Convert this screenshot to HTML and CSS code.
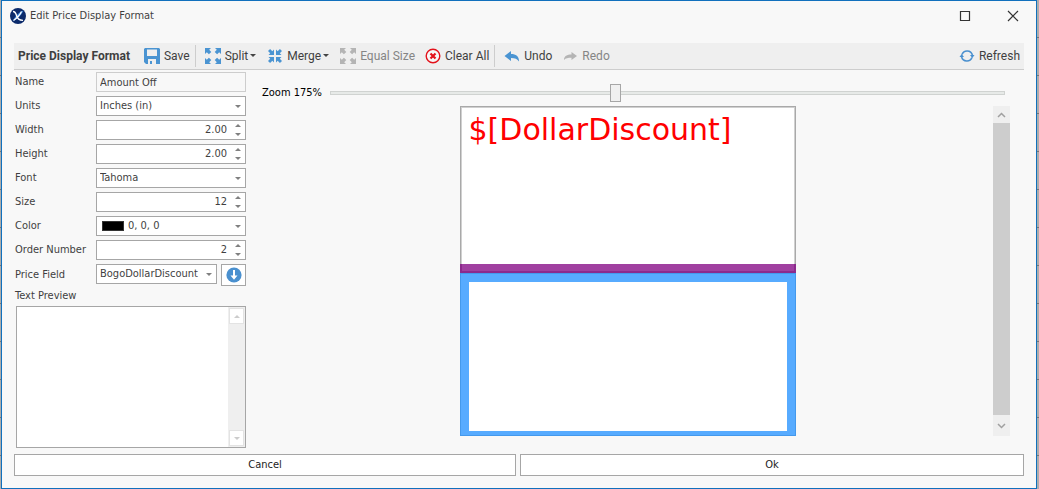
FILE: index.html
```html
<!DOCTYPE html>
<html lang="en">
<head>
<meta charset="utf-8">
<title>Edit Price Display Format</title>
<link rel="stylesheet" href="styles.css">
</head>
<body>
<svg class="defs" aria-hidden="true">
  <symbol id="expand" viewBox="0 0 16 16">
    <path d="M0 0h6L4.200 1.800 6.300 3.900 3.900 6.300 1.800 4.200 0 6z"/>
    <path d="M16 0h-6l1.800 1.800-2.100 2.100 2.400 2.400 2.100-2.100L16 6z"/>
    <path d="M0 16h6l-1.800-1.800 2.100-2.100-2.400-2.400-2.100 2.100L0 10z"/>
    <path d="M16 16h-6l1.800-1.800-2.100-2.100 2.400-2.400 2.100 2.100L16 10z"/>
  </symbol>
  <symbol id="shrink" viewBox="0 0 16 16">
    <path d="M7 7H1.500l1.700-1.700L1 3.100 3.100 1l2.200 2.200L7 1.500z"/>
    <path d="M9 7h5.500l-1.700-1.700L15 3.100 12.900 1l-2.200 2.200L9 1.500z"/>
    <path d="M7 9H1.500l1.700 1.700L1 12.900 3.100 15l2.200-2.200L7 14.500z"/>
    <path d="M9 9h5.500l-1.700 1.700 2.200 2.200-2.100 2.100-2.200-2.200L9 14.500z"/>
  </symbol>
</svg>
<main class="window">
  <header class="titlebar">
    <svg class="icon" viewBox="0 0 16 16" aria-hidden="true">
      <circle cx="8" cy="8" r="8" fill="#0b2a6b"/>
      <path d="M13.500 2.500C12 6 8.500 10.500 3 13 5 8 9 4 13.500 2.500z" fill="#3f8be0"/>
      <path d="M3 3.500c2.200 0 2.800 1.500 3.500 4C7.200 10.500 9 12.300 13 12.300M3.500 12.500C7 10 10 7 11.500 3.500" fill="none" stroke="#fff" stroke-width="1.300"/>
    </svg>
    <h1 class="title">Edit Price Display Format</h1>
    <button class="window-button" aria-label="Maximize"><svg viewBox="0 0 12 12"><path d="M1.500 1.500h9v9h-9z"/></svg></button>
    <button class="window-button" aria-label="Close"><svg viewBox="0 0 12 12"><path d="M1 1l10 10M11 1L1 11"/></svg></button>
  </header>

  <nav class="toolbar">
    <strong class="toolbar-title">Price Display Format</strong>
    <button class="tool"><svg class="icon blue" viewBox="0 0 16 16"><path fill-rule="evenodd" d="M1 0h14l1 1v15H2l-2-2V1zM3 1.500V8h10V1.500zM4 11v5h2v-3h2v3h4v-5z"/></svg>Save</button>
    <span class="separator"></span>
    <button class="tool"><svg class="icon blue"><use href="#expand"/></svg><span class="with-caret">Split</span></button>
    <button class="tool"><svg class="icon blue"><use href="#shrink"/></svg><span class="with-caret">Merge</span></button>
    <button class="tool" disabled><svg class="icon gray"><use href="#expand"/></svg>Equal Size</button>
    <button class="tool"><svg class="icon" viewBox="0 0 16 16"><circle cx="8" cy="8" r="6.800" fill="#fff" fill-opacity=".5" stroke="#e3121b" stroke-width="1.400"/><path d="M5.500 5.500l5 5M10.500 5.500l-5 5" stroke="#e3121b" stroke-width="2.200"/></svg>Clear All</button>
    <span class="separator"></span>
    <button class="tool"><svg class="icon blue" viewBox="0 0 16 16"><path d="M.5 8L7 3v3c5 0 8 2 8 7.500C13.500 11 11 10 7 10v3z"/></svg>Undo</button>
    <button class="tool" disabled><svg class="icon gray" viewBox="0 0 16 16"><path d="M15 8L9.500 4v2.500C5 6.500 2 8 2 12c1.500-1.800 4-2.200 7.500-2.200V12z"/></svg>Redo</button>
    <button class="tool refresh"><svg class="icon" viewBox="0 0 16 16"><path d="M3 6.500A5.500 5.500 0 0 1 13.400 7M13 9.500A5.500 5.500 0 0 1 2.600 9" fill="none" stroke="#4a90cf" stroke-width="1.600"/><path d="M11 7h4.500l-2.200 3zM.5 9H5L2.700 6z" fill="#4a90cf"/></svg>Refresh</button>
  </nav>

  <div class="workspace">
    <form class="settings">
      <label for="name">Name</label>
      <input class="field" id="name" value="Amount Off" readonly>
      <label for="units">Units</label>
      <select class="field" id="units"><option>Inches (in)</option></select>
      <label for="width">Width</label>
      <div class="field spin"><input id="width" value="2.00"><button type="button" class="up" aria-label="Increase width"></button><button type="button" class="down" aria-label="Decrease width"></button></div>
      <label for="height">Height</label>
      <div class="field spin"><input id="height" value="2.00"><button type="button" class="up" aria-label="Increase height"></button><button type="button" class="down" aria-label="Decrease height"></button></div>
      <label for="font">Font</label>
      <select class="field" id="font"><option>Tahoma</option></select>
      <label for="size">Size</label>
      <div class="field spin"><input id="size" value="12"><button type="button" class="up" aria-label="Increase size"></button><button type="button" class="down" aria-label="Decrease size"></button></div>
      <label for="color">Color</label>
      <div class="field color"><span class="swatch"></span><select id="color"><option>0, 0, 0</option></select></div>
      <label for="order">Order Number</label>
      <div class="field spin"><input id="order" value="2"><button type="button" class="up" aria-label="Increase order"></button><button type="button" class="down" aria-label="Decrease order"></button></div>
      <label for="price">Price Field</label>
      <div class="price-row">
        <select class="field" id="price"><option>BogoDollarDiscount</option></select>
        <button type="button" class="insert" aria-label="Insert price field"><svg viewBox="0 0 16 16"><circle cx="8" cy="8" r="7.600" fill="#4a90cf"/><path d="M7 3h2v5.500h2.500L8 12.800 4.500 8.500H7z" fill="#fff"/></svg></button>
      </div>
      <label class="preview-label" for="preview">Text Preview</label>
      <div class="preview">
        <textarea id="preview"></textarea>
        <div class="preview-scroll"><button type="button" class="up" aria-label="Scroll up"></button><button type="button" class="down" aria-label="Scroll down"></button></div>
      </div>
    </form>

    <section class="designer">
      <div class="zoom">
        <label for="zoom">Zoom 175%</label>
        <input id="zoom" type="range" min="0" max="415" value="175">
      </div>
      <div class="stage">
        <div class="sheet">
          <div class="cell">$[DollarDiscount]</div>
          <div class="splitter"></div>
          <div class="cell selected"></div>
        </div>
        <div class="scrollbar">
          <button aria-label="Scroll up"><svg viewBox="0 0 9 6"><path d="M1 5l3.500-3.500L8 5"/></svg></button>
          <span class="thumb"></span>
          <button aria-label="Scroll down"><svg viewBox="0 0 9 6"><path d="M1 1l3.500 3.500L8 1"/></svg></button>
        </div>
      </div>
    </section>
  </div>

  <footer class="actions">
    <button>Cancel</button>
    <button>Ok</button>
  </footer>
</main>
</body>
</html>
```
FILE: styles.css
```css
* { box-sizing: border-box; }

body {
  margin: 0;
  padding: 0 2px 0 1px;
  background: repeating-linear-gradient(#adadad 0 37px, #777 37px 38px);
  color: #3f3f3f;
  font: 11px/14px "DejaVu Sans Condensed", "DejaVu Sans", sans-serif;
}

button, input, select, textarea {
  margin: 0;
  padding: 0;
  border: 0;
  border-radius: 0;
  background: none;
  color: inherit;
  font: inherit;
}

select { appearance: none; }

.defs { position: absolute; width: 0; height: 0; }
.icon { width: 16px; height: 16px; flex: none; }
.blue { fill: #4a94d2; }
.gray { fill: #b4b4b4; }

.window {
  display: flex;
  flex-direction: column;
  min-height: 100vh;
  padding: 0 12px 12px;
  border: 1px solid #1170bd;
  background: #f8f8f8;
}

.titlebar {
  display: flex;
  align-items: center;
  height: 30px;
  margin: 0 -4px 12px;
}

.title {
  flex: 1;
  margin: 0 0 0 4px;
  font-size: 11px;
  font-weight: 400;
  line-height: 16px;
}

.window-button { display: flex; justify-content: center; width: 48px; }
.window-button:last-child { margin-right: -9px; }
.window-button svg { width: 12px; height: 12px; fill: none; stroke: #333; stroke-width: 1.200; }

.toolbar {
  display: flex;
  align-items: center;
  height: 27px;
  padding: 0 4px;
  border-bottom: 1px solid #cdcdcd;
  background: #efefef;
  font: 12px/16px Roboto, sans-serif;
}

.toolbar-title { margin-right: 9px; }
.tool { display: flex; align-items: center; gap: 4px; padding: 0 5px; white-space: nowrap; }
.tool:disabled { color: #858585; }
.refresh { margin-left: auto; padding-right: 0; }
.separator { width: 1px; height: 22px; margin: 0 4px 0 0; background: #cdcdcd; }

.with-caret::after {
  content: "";
  display: inline-block;
  margin: 0 1px 0 2px;
  border: 3px solid transparent;
  border-top-color: #444;
  border-bottom: 0;
  vertical-align: 3px;
}

.workspace {
  display: flex;
  flex: 1;
  gap: 16px;
  padding: 2px 14px 6px 1px;
}

.settings {
  display: grid;
  grid-template-columns: 81px 150px;
  grid-template-rows: repeat(8, 20px) 22px 12px 1fr;
  row-gap: 4px;
  align-items: center;
}

.field {
  display: flex;
  align-items: center;
  width: 100%;
  height: 20px;
  padding: 0 3px;
  border: 1px solid #a6a6a6;
  background-color: #fff;
}

input.field:read-only { border-color: #cdcdcd; background: #f8f8f8; }

select.field, .color select {
  background: #fff url("data:image/svg+xml,%3Csvg xmlns='http://www.w3.org/2000/svg' width='6' height='3'%3E%3Cpath d='M0 0h6L3 3z' fill='%23808080'/%3E%3C/svg%3E") no-repeat right 4px center;
}

.color { gap: 4px; padding: 0 0 0 5px; }
.color select { flex: 1; height: 100%; }
.swatch { width: 22px; height: 10px; border: 1px solid #333; background: #000; }

.spin { display: grid; grid-template-columns: 1fr 8px; column-gap: 7px; padding: 0 3px 0 0; }
.spin input { grid-row: 1 / 3; width: 100%; text-align: right; }

.up, .down { display: flex; justify-content: center; height: 9px; align-items: center; }
.up::before, .down::before { content: ""; border: 3px solid transparent; }
.up::before { border-bottom-color: #808080; border-top: 0; }
.down::before { border-top-color: #808080; border-bottom: 0; }

.price-row { display: flex; gap: 4px; align-items: flex-start; }
.price-row .field { flex: 1; min-width: 0; }
.insert { width: 25px; height: 22px; padding: 2px 4px; border: 1px solid #a6a6a6; background: #fff; }
.insert svg { display: block; width: 16px; height: 16px; }

.preview-label, .preview { grid-column: 1 / 3; }

.preview {
  display: flex;
  align-self: stretch;
  margin-left: 1px;
  border: 1px solid #a6a6a6;
  background: #fff;
}

.preview textarea { flex: 1; min-width: 0; resize: none; }

.preview-scroll {
  display: flex;
  flex-direction: column;
  justify-content: space-between;
  width: 17px;
  padding: 1px;
  background: #efefef;
}

.preview-scroll button { height: 16px; border: 1px solid #e3e3e3; background: #fff; }
.preview-scroll .up::before { border-bottom-color: #ccc; }
.preview-scroll .down::before { border-top-color: #ccc; }

.designer { display: flex; flex: 1; flex-direction: column; min-width: 0; }

.zoom {
  display: flex;
  align-items: center;
  gap: 8px;
  height: 18px;
  margin: 12px 5px 4px 0;
  color: #000;
}

.zoom label { width: 60px; white-space: nowrap; }
.zoom input { flex: 1; min-width: 0; height: 18px; appearance: none; }

.zoom input::-webkit-slider-runnable-track {
  height: 4px;
  border: 1px solid #d0d3d1;
  background: #e7eae8;
}

.zoom input::-webkit-slider-thumb {
  width: 11px;
  height: 18px;
  margin-top: -8px;
  border: 1px solid #a6a6a6;
  background: #f0f0f0;
  appearance: none;
}

.stage { display: flex; flex: 1; margin-bottom: 12px; }

.sheet {
  display: grid;
  grid-template-rows: 158px 9px 1fr;
  width: 336px;
  margin: 0 auto;
}

.cell {
  padding: 8px;
  border: 1px solid #a9a9a9;
  border-bottom: 0;
  box-shadow: inset 1px 1px #d0d0d0, inset -1px 0 #d0d0d0;
  background: #fff;
  color: #f00;
  font: 30px/30px "DejaVu Sans", sans-serif;
}

.splitter { border: solid #8c2a8c; border-width: 0 2px 2px; background: #a040a0; }

.selected {
  border: solid #57abff;
  border-width: 9px 9px 5px;
  outline: 1px solid #4499ec;
  outline-offset: -1px;
  box-shadow: none;
}

.scrollbar { display: flex; flex-direction: column; width: 17px; background: #efefef; }
.scrollbar button { display: flex; align-items: center; justify-content: center; height: 17px; }
.scrollbar button:last-child { height: 21px; }
.scrollbar svg { width: 9px; height: 6px; fill: none; stroke: #a0a0a0; stroke-width: 1.500; }
.thumb { flex: 1; background: #cdcdcd; }

.actions { display: grid; grid-template-columns: 502px 1fr; gap: 4px; }
.actions button { height: 22px; border: 1px solid #a6a6a6; background: #fff; color: #222; }
```
